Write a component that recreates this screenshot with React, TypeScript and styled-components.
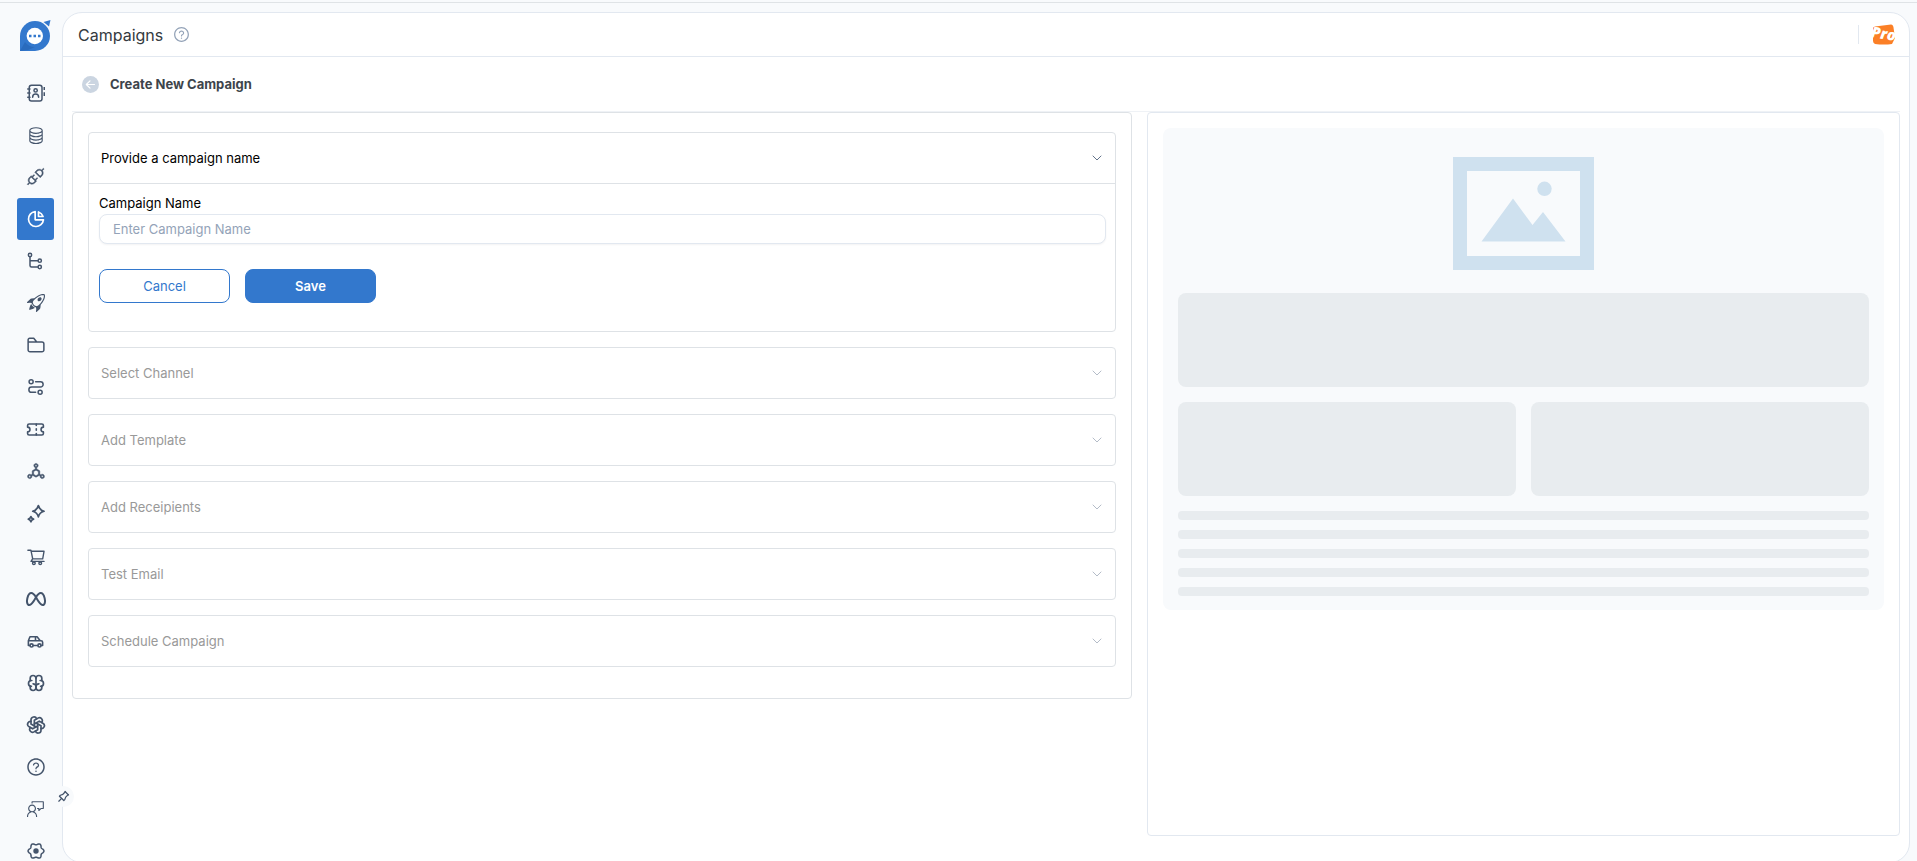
import React from 'react';
import styled, { createGlobalStyle, css } from 'styled-components';
import { BsDatabase, BsRocketTakeoff } from 'react-icons/bs';
import { VscDebugDisconnect, VscFeedback } from 'react-icons/vsc';
import { HiOutlineChartPie } from 'react-icons/hi';
import { LuTicket, LuChevronDown } from 'react-icons/lu';
import {
  AiOutlineDeploymentUnit,
  AiOutlineQuestionCircle,
  AiOutlineShoppingCart,
} from 'react-icons/ai';
import { TbBrain, TbBrandMeta, TbBrandOpenai, TbCar, TbPin } from 'react-icons/tb';

const GlobalStyle = createGlobalStyle`
  *, *::before, *::after { box-sizing: border-box; }
  body {
    margin: 0;
    background: #f8fafc;
    color: #000;
    font-family: Inter, "Liberation Sans", sans-serif;
    font-size: 13px;
    line-height: 20px;
  }
  button, input { font: inherit; }
`;

const Page = styled.div`
  display: flex;
  flex-direction: column;
  height: 100vh;
  overflow: hidden;
`;

const TopRule = styled.div`
  flex: none;
  height: 3px;
  border-bottom: 1px solid #dfe3e6;
`;

const Shell = styled.div`
  flex: 1;
  min-height: 0;
  display: flex;
  padding: 9px 7px 0 0;
`;

const Sidebar = styled.nav`
  flex: 0 0 62px;
  padding: 8px 8px 0 17px;
`;

const LogoLink = styled.a`
  display: flex;
  justify-content: center;
  height: 52px;
`;

const NavList = styled.ul`
  list-style: none;
  margin: 0;
  padding: 0;
`;

const NavLink = styled.a<{ $active?: boolean }>`
  display: flex;
  align-items: center;
  justify-content: center;
  min-height: 42px;
  padding: 11px 0;
  border-radius: 3px;
  color: ${(p) => (p.$active ? '#fff' : '#44546b')};
  background: ${(p) => (p.$active ? '#3378cd' : 'transparent')};
`;

const WideMetaIcon = styled(TbBrandMeta)`
  margin: -2px;
`;

const Panel = styled.div`
  position: relative;
  flex: 1;
  min-width: 0;
  display: flex;
  flex-direction: column;
  margin-bottom: -2px;
  background: #fff;
  border: 1px solid #e2e8f0;
  border-radius: 20px;
`;

const PinButton = styled.button`
  position: absolute;
  left: -10px;
  bottom: 55px;
  width: 21px;
  height: 21px;
  display: flex;
  align-items: center;
  justify-content: center;
  padding: 0;
  border: 0;
  border-radius: 50%;
  background: #f8fafc;
  color: #44546b;
`;

const Header = styled.header`
  display: flex;
  align-items: center;
  height: 44px;
  padding: 0 13px 0 15px;
  border-bottom: 1px solid #e2e8f0;
`;

const PageTitle = styled.h1`
  margin: 0;
  font-size: 16px;
  font-weight: 400;
  color: #343a40;
`;

const IconButton = styled.button`
  display: flex;
  padding: 0;
  border: 0;
  background: none;
  color: #94a3b8;
`;

const HelpButton = styled(IconButton)`
  margin-left: 10px;
`;

const Account = styled.div`
  display: flex;
  align-items: center;
  margin-left: auto;
  gap: 13px;
`;

const Separator = styled.span`
  width: 1px;
  height: 19px;
  background: #e2e8f0;
`;

const Content = styled.main`
  flex: 1;
  display: flex;
  flex-direction: column;
  padding: 0 9px 26px 9px;
`;

const SubHeader = styled.div`
  display: flex;
  align-items: center;
  gap: 11px;
  height: 55px;
  padding-left: 10px;
  border-bottom: 1px solid #eff2f6;
`;

const SubTitle = styled.h2`
  margin: 0;
  font-size: 13px;
  font-weight: 700;
  color: #3d444b;
`;

const Columns = styled.div`
  flex: 1;
  display: flex;
  gap: 15px;
`;

const StepsCard = styled.section`
  flex: 0 0 calc(100% * 7 / 12 - 6px);
  align-self: flex-start;
  display: flex;
  flex-direction: column;
  gap: 15px;
  padding: 19px 15px 31px;
  border: 1px solid #dee2e6;
  border-radius: 4px;
`;

const Step = styled.section`
  border: 1px solid #dee2e6;
  border-radius: 4px;
`;

const StepHeader = styled.button`
  display: flex;
  align-items: center;
  justify-content: space-between;
  width: 100%;
  height: 50px;
  padding: 0 10px 0 12px;
  border: 0;
  background: none;
  color: #000;
  text-align: left;

  svg {
    color: #64748b;
    stroke-width: 1.5;
  }

  &:disabled {
    color: #999;
  }

  &:disabled svg {
    color: #b4bcc8;
  }
`;

const StepForm = styled.form`
  display: flex;
  flex-direction: column;
  padding: 9px 9px 28px 10px;
  border-top: 1px solid #dee2e6;
`;

const FieldLabel = styled.label`
  line-height: 20px;
`;

const TextInput = styled.input`
  height: 30px;
  margin-top: 1px;
  padding: 0 13px;
  border: 1px solid #e2e8f0;
  border-radius: 8px;
  box-shadow: 0 1px 2px rgba(15, 23, 42, 0.05);
  background: #fff;

  &::placeholder {
    color: #94a3b8;
    opacity: 1;
  }
`;

const Actions = styled.div`
  display: flex;
  gap: 15px;
  margin-top: 25px;
`;

const ActionButton = styled.button<{ $primary?: boolean }>`
  width: 131px;
  height: 34px;
  border: 1px solid #3378cd;
  border-radius: 8px;
  background: #fff;
  color: #3378cd;
  ${(p) =>
    p.$primary &&
    css`
      background: #3378cd;
      color: #fff;
      font-weight: 600;
    `}
`;

const PreviewCard = styled.section`
  flex: 1;
  min-width: 0;
  padding: 15px;
  border: 1px solid #e2e8f0;
  border-radius: 4px;
`;

const Preview = styled.div`
  display: grid;
  grid-template-columns: 1fr 1fr;
  gap: 15px;
  padding: 29px 15px 14px;
  border-radius: 8px;
  background: #f8fafc;
`;

const Picture = styled.div`
  grid-column: 1 / -1;
  display: flex;
  justify-content: center;
  padding-bottom: 8px;
`;

const Block = styled.div<{ $wide?: boolean }>`
  grid-column: ${(p) => (p.$wide ? '1 / -1' : 'auto')};
  height: 94px;
  border-radius: 8px;
  background: #e8ecef;
`;

const Lines = styled.div`
  grid-column: 1 / -1;
  display: flex;
  flex-direction: column;
  gap: 10px;
`;

const Line = styled.div`
  height: 9px;
  border-radius: 4px;
  background: #e8ecef;
`;

type IconProps = { size?: number; viewBox?: string };

const Stroke = ({
  size = 18,
  viewBox = '0 0 24 24',
  children,
}: IconProps & { children: React.ReactNode }) => (
  <svg
    width={size}
    height={size}
    viewBox={viewBox}
    fill="none"
    stroke="currentColor"
    strokeWidth="2"
    strokeLinecap="round"
    strokeLinejoin="round"
    aria-hidden="true"
  >
    {children}
  </svg>
);

const ContactsIcon = () => (
  <Stroke>
    <rect x="3" y="1.500" width="17" height="21" rx="3" />
    <path d="M1 6.500h3M1 12h3M1 17.500h3" />
    <path d="M23 4v4M23 11v5" strokeLinecap="butt" />
    <circle cx="11.500" cy="8.500" r="2.200" />
    <path d="M7.500 17.500c0-5.500 8-5.500 8 0" />
  </Stroke>
);

const TreeIcon = () => (
  <Stroke>
    <circle cx="4" cy="4" r="2.200" />
    <circle cx="17" cy="11.500" r="2.200" />
    <circle cx="17" cy="20" r="2.200" />
    <path d="M4 6.500V18a2 2 0 0 0 2 2h8.500M4 11.500h10.500" />
  </Stroke>
);

const FolderIcon = () => (
  <Stroke>
    <path d="M1.500 8H20a2.500 2.500 0 0 1 2.500 2.500v8A2.500 2.500 0 0 1 20 21H4a2.500 2.500 0 0 1-2.500-2.500V5a2 2 0 0 1 2-2H9l4 5" />
  </Stroke>
);

const RouteIcon = () => (
  <Stroke>
    <circle cx="5.500" cy="5" r="2.700" />
    <circle cx="17.500" cy="19" r="2.700" />
    <path d="M11.500 5H18a3.500 3.500 0 0 1 0 7H6a3.500 3.500 0 0 0 0 7h5.500" />
  </Stroke>
);

const SparkleIcon = () => (
  <Stroke size={22} viewBox="-1 -1 26 26">
    <path d="M14.800 2c.9 4 2.600 5.700 6.700 6.700-4.100 1-5.800 2.700-6.700 6.700-.9-4-2.600-5.700-6.700-6.700 4.100-1 5.800-2.700 6.700-6.700z" />
    <path d="M6 15c.5 1.900 1.200 2.600 3.100 3.100-1.900.5-2.600 1.200-3.100 3.100-.5-1.900-1.200-2.600-3.100-3.100C4.800 17.600 5.500 16.900 6 15z" />
  </Stroke>
);

const gearOutline = Array.from({ length: 72 }, (_, i) => {
  const a = (i * Math.PI) / 36;
  const r = 9.4 + 1.2 * Math.cos(6 * a);
  return `${(12 + r * Math.cos(a)).toFixed(2)},${(12 + r * Math.sin(a)).toFixed(2)}`;
}).join(' ');

const GearIcon = () => (
  <Stroke>
    <polygon points={gearOutline} />
    <circle cx="12" cy="12" r="2.600" fill="currentColor" />
  </Stroke>
);

const Logo = () => (
  <svg width="31" height="31" viewBox="0 0 31 31" aria-hidden="true">
    <path d="M0 31V16A15 15 0 0 1 15 1a15 15 0 0 1 0 30z" fill="#3378cd" />
    <path d="M0 31l5-9a12 12 0 0 0 10 5l-7 3z" fill="#2a6bbd" />
    <path d="M23.500 2L30.500 0 29 6.500z" fill="#3378cd" />
    <circle cx="14.800" cy="16" r="8.200" fill="#fff" />
    <path d="M9 14.700h2.500v2.500H9zM13.500 14.700H16v2.500h-2.500zM18 14.700h2.500v2.500H18z" fill="#3378cd" />
  </svg>
);

const BackIcon = () => (
  <svg width="17" height="17" viewBox="0 0 17 17" aria-hidden="true">
    <circle cx="8.500" cy="8.500" r="8.500" fill="#cbd5e1" />
    <path
      d="M12.500 8.500h-8M8 4.800L4.300 8.500 8 12.200"
      fill="none"
      stroke="#fff"
      strokeWidth="1.200"
      strokeLinecap="round"
      strokeLinejoin="round"
    />
  </svg>
);

const AccountLogo = () => (
  <svg width="24" height="24" viewBox="0 0 24 24" role="img" aria-label="Pro">
    <path d="M1 5Q1 4 3 3.500L19 1.500q2 0 2.500 3L23 15l-3 6q-8 1-17 0-2-1-2-3z" fill="#fb7f26" />
    <text
      x="-1"
      y="16"
      fill="#fff"
      fontFamily="Open Sans, sans-serif"
      fontSize="15"
      fontWeight="800"
      fontStyle="italic"
      transform="rotate(9 12 12)"
    >
      Pro
    </text>
  </svg>
);

const PictureIcon = () => (
  <svg width="141" height="113" viewBox="0 0 141 113" fill="#cfe1ef" aria-hidden="true">
    <path d="M0 0h141v113H0zM14 14v85h113V14z" fillRule="evenodd" />
    <circle cx="91.500" cy="31.800" r="7.200" />
    <path d="M28.500 84.500L60 41.500l19.500 26.500 10.500-13 22.500 29.500z" />
  </svg>
);

const navItems: { label: string; icon: React.ReactNode; active?: boolean }[] = [
  { label: 'Contacts', icon: <ContactsIcon /> },
  { label: 'Database', icon: <BsDatabase size={18} /> },
  { label: 'Integrations', icon: <VscDebugDisconnect size={20} strokeWidth={0.4} /> },
  { label: 'Campaigns', icon: <HiOutlineChartPie size={20} />, active: true },
  { label: 'Flows', icon: <TreeIcon /> },
  { label: 'Launch', icon: <BsRocketTakeoff size={18} /> },
  { label: 'Files', icon: <FolderIcon /> },
  { label: 'Journeys', icon: <RouteIcon /> },
  { label: 'Tickets', icon: <LuTicket size={19} /> },
  { label: 'Network', icon: <AiOutlineDeploymentUnit size={20} strokeWidth={25} /> },
  { label: 'Assistant', icon: <SparkleIcon /> },
  { label: 'Store', icon: <AiOutlineShoppingCart size={20} /> },
  { label: 'Meta', icon: <WideMetaIcon size={24} /> },
  { label: 'Vehicles', icon: <TbCar size={19} /> },
  { label: 'Knowledge', icon: <TbBrain size={20} /> },
  { label: 'OpenAI', icon: <TbBrandOpenai size={20} /> },
  { label: 'Help', icon: <AiOutlineQuestionCircle size={20} /> },
  { label: 'Feedback', icon: <VscFeedback size={18} /> },
  { label: 'Settings', icon: <GearIcon /> },
];

const lockedSteps = ['Select Channel', 'Add Template', 'Add Receipients', 'Test Email', 'Schedule Campaign'];

export default function App() {
  return (
    <Page>
      <GlobalStyle />
      <TopRule />
      <Shell>
        <Sidebar aria-label="Main">
          <LogoLink href="#" aria-label="Home">
            <Logo />
          </LogoLink>
          <NavList>
            {navItems.map((item) => (
              <li key={item.label}>
                <NavLink
                  href="#"
                  aria-label={item.label}
                  aria-current={item.active ? 'page' : undefined}
                  $active={item.active}
                >
                  {item.icon}
                </NavLink>
              </li>
            ))}
          </NavList>
        </Sidebar>
        <Panel>
          <Header>
            <PageTitle>Campaigns</PageTitle>
            <HelpButton type="button" aria-label="Help">
              <AiOutlineQuestionCircle size={17} />
            </HelpButton>
            <Account>
              <Separator />
              <AccountLogo />
            </Account>
          </Header>
          <Content>
            <SubHeader>
              <IconButton type="button" aria-label="Back">
                <BackIcon />
              </IconButton>
              <SubTitle>Create New Campaign</SubTitle>
            </SubHeader>
            <Columns>
              <StepsCard>
                <Step>
                  <StepHeader type="button" aria-expanded="true">
                    Provide a campaign name
                    <LuChevronDown size={16} />
                  </StepHeader>
                  <StepForm onSubmit={(e) => e.preventDefault()}>
                    <FieldLabel htmlFor="campaign-name">Campaign Name</FieldLabel>
                    <TextInput id="campaign-name" type="text" placeholder="Enter Campaign Name" />
                    <Actions>
                      <ActionButton type="button">Cancel</ActionButton>
                      <ActionButton type="submit" $primary>
                        Save
                      </ActionButton>
                    </Actions>
                  </StepForm>
                </Step>
                {lockedSteps.map((name) => (
                  <Step key={name}>
                    <StepHeader type="button" aria-expanded="false" disabled>
                      {name}
                      <LuChevronDown size={16} />
                    </StepHeader>
                  </Step>
                ))}
              </StepsCard>
              <PreviewCard aria-label="Preview">
                <Preview>
                  <Picture>
                    <PictureIcon />
                  </Picture>
                  <Block $wide />
                  <Block />
                  <Block />
                  <Lines>
                    <Line />
                    <Line />
                    <Line />
                    <Line />
                    <Line />
                  </Lines>
                </Preview>
              </PreviewCard>
            </Columns>
          </Content>
          <PinButton type="button" aria-label="Pin sidebar">
            <TbPin size={15} />
          </PinButton>
        </Panel>
      </Shell>
    </Page>
  );
}
